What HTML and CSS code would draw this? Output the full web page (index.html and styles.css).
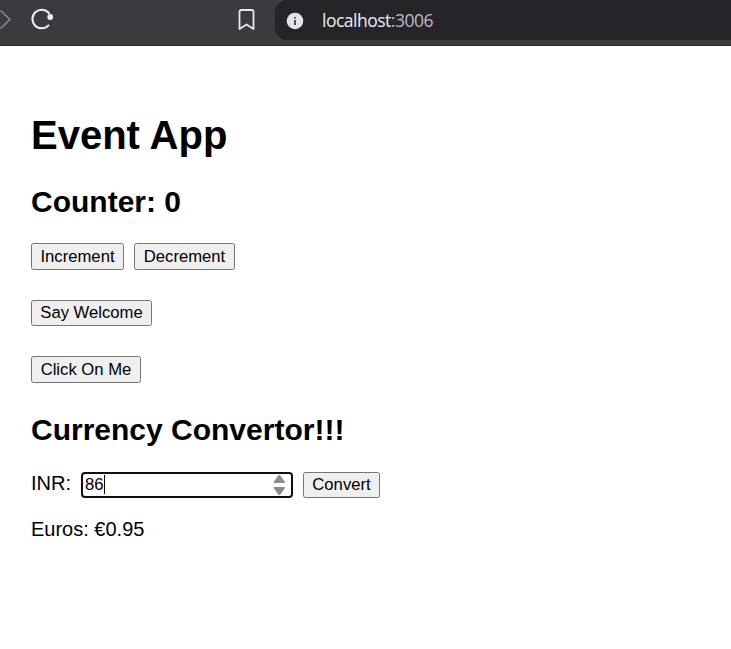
FILE: index.html
```html
<!DOCTYPE html>
<html lang="en">
<head>
<meta charset="utf-8">
<title>Event App</title>
<link rel="stylesheet" href="styles.css">
</head>
<body>
<header class="toolbar">
  <svg class="nav-icons" width="275" height="40" viewBox="0 0 275 40" fill="none" stroke-linecap="round" stroke-linejoin="round" aria-hidden="true">
    <path d="M1 11L10 19.5L1 28" stroke="#89898c" stroke-width="1.7"/>
    <path d="M49 13.200A9.300 9.300 0 1 0 48.500 25.400" stroke="#f0eff4" stroke-width="2"/>
    <circle cx="50.2" cy="17" r="2.9" fill="#f0eff4"/>
    <path d="M239.500 29V12Q239.500 10 241.500 10H251.500Q253.500 10 253.500 12V29L246.500 24.500Z" stroke="#e8e7ec" stroke-width="1.8"/>
  </svg>
  <div class="address">
    <svg class="info" width="18" height="18" viewBox="0 0 18 18" aria-hidden="true">
      <circle cx="9" cy="9" r="8.300" fill="#e4e3e9"/>
      <path d="M8.200 5h1.600v1.600H8.200zM8.200 8h1.600v5H8.200z" fill="#29282d"/>
    </svg>
    <span class="url">localhost<span class="port">:3006</span></span>
  </div>
</header>
<main class="app">
  <h1>Event App</h1>
  <h2>Counter: 0</h2>
  <div class="row actions">
    <button class="increment">Increment</button>
    <button class="decrement">Decrement</button>
  </div>
  <button class="welcome">Say Welcome</button>
  <button class="click-me">Click On Me</button>
  <h2 class="convertor">Currency Convertor!!!</h2>
  <div class="row">
    <span class="label">INR:</span>
    <div class="amount">
      <span class="value">86</span><span class="caret"></span>
      <svg class="spinner" width="12" height="20" viewBox="0 0 12 20" fill="#8b8b8b" aria-hidden="true">
        <path d="M5.700 0h1.200L11.800 6.700V8H.8V6.700zM.8 12h11v1.300L6.900 20H5.700L.8 13.300z"/>
      </svg>
    </div>
    <button class="convert">Convert</button>
  </div>
  <p class="result">Euros: €0.95</p>
</main>
</body>
</html>
```
FILE: styles.css
```css
* { box-sizing: border-box; }
body {
  margin: 0;
  background: #fff;
  color: #000;
  font: 20px/23px "Liberation Sans", Arial, sans-serif;
}
.toolbar {
  display: flex;
  height: 46px;
  background: #3b3a3f;
  border-bottom: 1px solid #29282c;
}
.nav-icons { flex: none; }
.address {
  display: flex;
  align-items: center;
  flex: 1;
  height: 40px;
  padding-left: 11px;
  border-radius: 12px 0 0 12px;
  background: #252429;
}
.info { margin-top: 2px; }
.url {
  margin: -1px 0 0 18px;
  color: #eeedf2;
  font: 17.5px/24px "Open Sans", "Noto Sans", sans-serif;
  letter-spacing: -0.5px;
}
.port { color: #bdbcc2; }
.app {
  display: flex;
  flex-direction: column;
  align-items: flex-start;
  padding: 66px 31px 0;
}
h1 { margin: 0; font-size: 40px; line-height: 46px; }
h2 { margin: 27px 0 0; font-size: 30px; line-height: 34px; }
.row { display: flex; align-items: flex-start; gap: 10px; }
.actions { margin-top: 24px; }
button {
  height: 26px;
  padding: 0;
  border: 1px solid #767676;
  border-radius: 2.5px;
  background: #efefef;
  color: #000;
  font: 16.667px/24px "Liberation Sans", Arial, sans-serif;
  white-space: nowrap;
}
.increment { width: 93px; height: 27px; }
.decrement { width: 101px; height: 27px; }
.welcome { width: 121px; margin-top: 30px; }
.click-me { width: 110px; height: 27px; margin-top: 30px; }
.convertor { margin: 30px 0 25px; }
.label { width: 40px; }
.amount {
  display: flex;
  align-items: center;
  width: 212px;
  height: 26px;
  padding: 0 6px 0 2px;
  border: 2px solid #101010;
  border-radius: 4px;
  font-size: 16.667px;
}
.value { margin-top: -2px; }
.caret { width: 1px; height: 19px; margin-top: -1px; background: #000; }
.spinner { margin-left: auto; }
.convert { width: 77px; }
.result { margin: 20px 0 0; }
```
